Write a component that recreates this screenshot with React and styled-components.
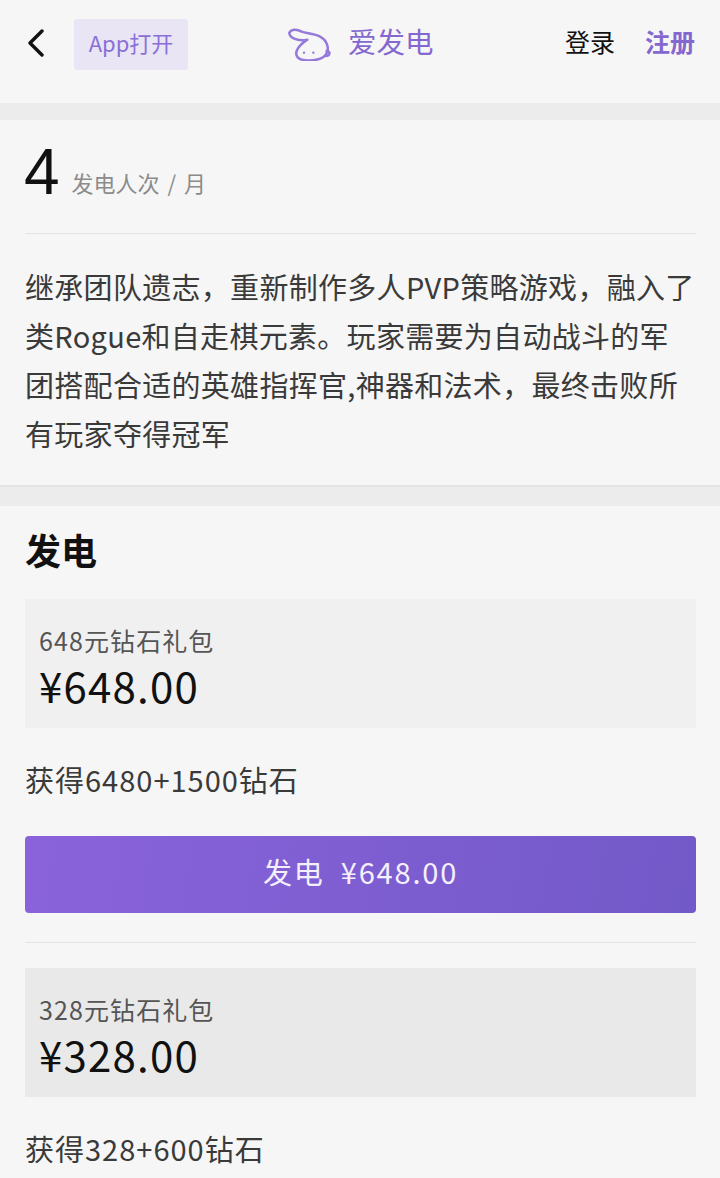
import styled, { createGlobalStyle } from 'styled-components';

const GlobalStyle = createGlobalStyle`
  html, body {
    margin: 0;
    padding: 0;
    background: #f6f6f6;
    overflow: hidden;
  }
  body {
    font-family: "Noto Sans CJK SC", "Noto Sans", sans-serif;
  }
`;

const Page = styled.div`
  width: 720px;
  height: 1178px;
  overflow: hidden;
  background: #f6f6f6;
`;

const Header = styled.header`
  height: 103px;
  box-sizing: border-box;
  padding: 19px 25px 0 25px;
  display: flex;
  align-items: flex-start;
  position: relative;
`;

const BackIcon = styled.svg`
  width: 20px;
  height: 28px;
  margin-top: 10px;
  flex-shrink: 0;
`;

const AppOpen = styled.div`
  margin-left: 29px;
  width: 114px;
  height: 51px;
  border-radius: 3px;
  background: #e9e5f5;
  color: #8a70d6;
  font-size: 22px;
  line-height: 47px;
  text-align: center;
`;

const Brand = styled.div`
  position: absolute;
  left: 287px;
  top: 24px;
  display: flex;
  align-items: center;
  gap: 17px;
`;

const BrandName = styled.span`
  color: #8468d0;
  font-size: 28.5px;
  line-height: 34px;
  margin-bottom: 3px;
`;

const Auth = styled.div`
  margin-left: auto;
  display: flex;
  gap: 30px;
  padding-top: 4px;
  font-size: 25px;
  line-height: 36px;
`;

const AuthLink = styled.span`
  color: ${(p) => (p.$accent ? '#8468d0' : '#111')};
  font-weight: ${(p) => (p.$accent ? 700 : 400)};
`;

const Gap = styled.div`
  height: ${(p) => p.$h}px;
  background: #ececec;
  border-top: ${(p) => (p.$line ? '2px solid #e4e4e4' : 'none')};
  box-sizing: border-box;
`;

const Section = styled.section`
  padding: 0 24px 0 25px;
`;

const Stats = styled.div`
  height: 114px;
  box-sizing: border-box;
  border-bottom: 1px solid #e4e4e4;
  display: flex;
  align-items: flex-start;
  gap: 12px;
`;

const StatNumber = styled.span`
  font-family: "Liberation Sans", sans-serif;
  font-size: 64px;
  line-height: 64px;
  margin-top: 20px;
  margin-left: -1px;
  color: #111;
`;

const StatLabel = styled.span`
  font-size: 22px;
  line-height: 30px;
  color: #8b8b8b;
  margin-top: 47px;
  word-spacing: 3px;
`;

const Intro = styled.p`
  margin: 28px 0 0;
  height: 223px;
  font-size: 29px;
  line-height: 49px;
  letter-spacing: 0.3px;
  color: #3a3a3a;
`;

const Title = styled.h2`
  margin: 0;
  padding-top: 20px;
  font-size: 36px;
  line-height: 46px;
  font-weight: 700;
  color: #111;
`;

const Gift = styled.div`
  height: 129px;
  box-sizing: border-box;
  padding: 25px 15px 0;
  background: ${(p) => p.$bg};
  margin-top: ${(p) => p.$top}px;
`;

const GiftName = styled.div`
  font-size: 25px;
  line-height: 32px;
  letter-spacing: 1.1px;
  color: #555;
  margin-left: -1px;
`;

const GiftPrice = styled.div`
  font-size: 42px;
  line-height: 58px;
  letter-spacing: 1.2px;
  color: #111;
  margin-left: -1px;
`;

const GiftDesc = styled.div`
  margin-top: 31px;
  font-size: 29px;
  line-height: 40px;
  letter-spacing: 1px;
  color: #3a3a3a;
`;

const PayButton = styled.button`
  display: block;
  width: 100%;
  height: 77px;
  margin-top: 37px;
  padding: 0 0 7px;
  border: none;
  border-radius: 4px;
  background: linear-gradient(100deg, #8a63db, #7259c8);
  color: #f4f0fb;
  font-family: inherit;
  font-size: 29px;
  letter-spacing: 1.8px;
  word-spacing: 8px;
`;

const Divider = styled.div`
  height: 1px;
  margin-top: 29px;
  background: #e4e4e4;
`;

const Logo = () => (
  <svg width="44" height="36" viewBox="861 72 132 108" fill="none" stroke="#9479da" strokeWidth="7.5" strokeLinecap="round" strokeLinejoin="round">
    <path d="M868 96 C872 84 890 84 905 92 C925 100 968 96 981 130 C985 142 984 152 978 160 C968 175 940 180 915 178 C895 176 885 165 890 150 C895 135 908 125 922 116 C900 122 868 112 868 96" />
    <path d="M980 150 C992 150 992 165 975 165" />
    <circle cx="912" cy="155" r="3.5" fill="#9479da" stroke="none" />
    <circle cx="940" cy="155" r="3.5" fill="#9479da" stroke="none" />
  </svg>
);

export default function App() {
  return (
    <Page>
      <GlobalStyle />
      <Header>
        <BackIcon viewBox="0 0 20 28" fill="none" stroke="#111" strokeWidth="3.4" strokeLinecap="round" strokeLinejoin="round">
          <path d="M17 2 L5 14 L17 26" />
        </BackIcon>
        <AppOpen>App打开</AppOpen>
        <Brand>
          <Logo />
          <BrandName>爱发电</BrandName>
        </Brand>
        <Auth>
          <AuthLink>登录</AuthLink>
          <AuthLink $accent>注册</AuthLink>
        </Auth>
      </Header>
      <Gap $h={17} />
      <Section>
        <Stats>
          <StatNumber>4</StatNumber>
          <StatLabel>发电人次 / 月</StatLabel>
        </Stats>
        <Intro>继承团队遗志，重新制作多人PVP策略游戏，融入了类Rogue和自走棋元素。玩家需要为自动战斗的军团搭配合适的英雄指挥官,神器和法术，最终击败所有玩家夺得冠军</Intro>
      </Section>
      <Gap $h={21} $line />
      <Section>
        <Title>发电</Title>
        <Gift $bg="#f0f0f0" $top={27}>
          <GiftName>648元钻石礼包</GiftName>
          <GiftPrice>¥648.00</GiftPrice>
        </Gift>
        <GiftDesc>获得6480+1500钻石</GiftDesc>
        <PayButton>发电 ¥648.00</PayButton>
        <Divider />
        <Gift $bg="#e9e9e9" $top={25}>
          <GiftName>328元钻石礼包</GiftName>
          <GiftPrice>¥328.00</GiftPrice>
        </Gift>
        <GiftDesc>获得328+600钻石</GiftDesc>
      </Section>
    </Page>
  );
}
